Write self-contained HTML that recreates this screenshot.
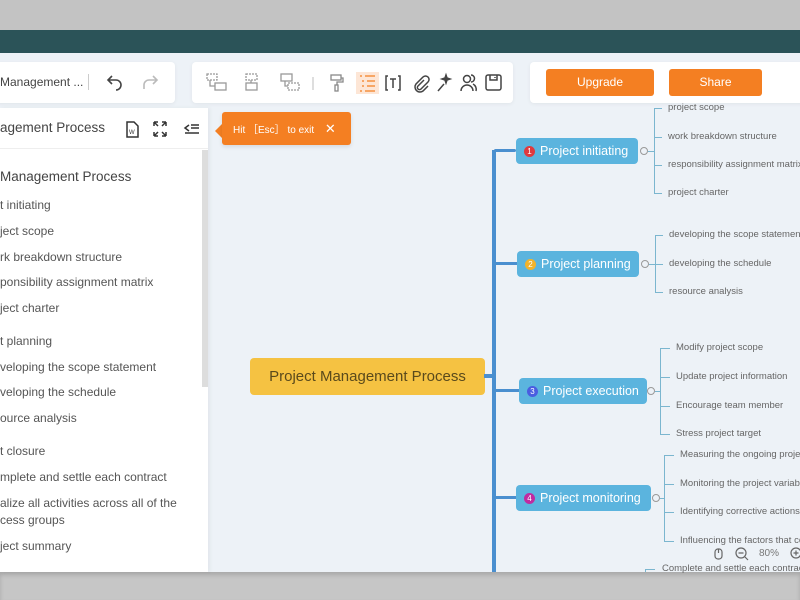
<!DOCTYPE html>
<html><head><meta charset="utf-8"><style>
*{margin:0;padding:0;box-sizing:border-box}
body{width:800px;height:600px;overflow:hidden;position:relative;background:#edf2f7;font-family:"Liberation Sans",sans-serif;color:#444}
.a{position:absolute}
.t{position:absolute;white-space:nowrap}
.box{position:absolute;background:#fff;border-radius:4px;box-shadow:0 1px 4px rgba(0,0,0,.06)}
.btn{position:absolute;background:#f47f22;color:#fff;border-radius:3px;font-size:12px;text-align:center;line-height:27px}
.lp{font-size:12px;color:#555}
.node{position:absolute;background:#5bb4de;color:#fff;border-radius:4px;font-size:12.5px;line-height:26px;padding-left:8px;white-space:nowrap}
.bd{display:inline-block;width:11px;height:11px;border-radius:50%;font-size:8px;line-height:11px;text-align:center;color:#fff;margin-right:5px;vertical-align:1px}
.ch{position:absolute;font-size:9.5px;color:#666;white-space:nowrap}
.ln{position:absolute;background:#7bb6cf}
.cc{position:absolute;width:8px;height:8px;border:1px solid #999;border-radius:50%;background:#edf2f7}
</style></head><body>
<div class="a" style="left:0;top:0;width:800px;height:30px;background:#c3c3c3"></div>
<div class="a" style="left:0;top:30px;width:800px;height:23px;background:#2b5358"></div>
<div class="a" style="left:0;top:572px;width:800px;height:28px;background:#c6c6c6;box-shadow:inset 0 3px 4px rgba(0,0,0,.15)"></div>

<!-- toolbar 1 -->
<div class="box" style="left:-5px;top:62px;width:180px;height:41px"></div>
<div class="t" style="left:0;top:75px;font-size:12px;color:#444">Management ...</div>
<div class="a" style="left:88px;top:74px;width:1px;height:16px;background:#ccc"></div>
<svg class="a" style="left:105px;top:73px" width="20" height="18" viewBox="0 0 20 18" fill="none" stroke="#444" stroke-width="1.6"><path d="M7 3L3 7l4 4M3 7h8a5 5 0 0 1 0 10"/></svg>
<svg class="a" style="left:140px;top:73px" width="20" height="18" viewBox="0 0 20 18" fill="none" stroke="#bbb" stroke-width="1.6"><path d="M13 3l4 4-4 4M17 7H9a5 5 0 0 0-5 5v4"/></svg>

<!-- toolbar 2 -->
<div class="box" style="left:192px;top:62px;width:321px;height:41px"></div>
<svg class="a" style="left:205px;top:72px" width="300" height="22" viewBox="0 0 300 22" fill="none" stroke="#999" stroke-width="1.3">
<rect x="2" y="2" width="10" height="6" stroke-dasharray="2 1"/><path d="M5 8v6h5"/><rect x="10" y="11" width="11" height="7"/>
<rect x="41" y="2" width="11" height="6" stroke-dasharray="2 1"/><path d="M46 8v3"/><rect x="41" y="11" width="11" height="7"/>
<rect x="76" y="2" width="11" height="7"/><path d="M80 9v5h3"/><rect x="83" y="11" width="11" height="7" stroke-dasharray="2 1"/>
<path d="M108 5v13" stroke="#ccc"/>
<g stroke="#888"><rect x="126" y="3" width="10" height="5"/><path d="M136 6h2v4h-6v3"/><rect x="130" y="13" width="3" height="6"/></g>
<rect x="151" y="0" width="23" height="22" fill="#fde6d6" stroke="none"/>
<g stroke="#f47f22"><path d="M155 4h2M160 4h10M157 9h2M162 9h8M157 14h2M162 14h8M155 19h2M160 19h10"/></g>
<g stroke="#444" stroke-width="1.5"><path d="M183 4h-2v14h2M193 4h2v14h-2M185 7h6M188 7v9"/>
<path d="M219 8l-6 6a2 2 0 0 0 3 3l7-7a3.5 3.5 0 0 0-5-5l-7 7a5 5 0 0 0 7 7l5-5"/>
<path d="M233 19l6-7M240 6l1-3 1 3 3 1-3 1-1 3-1-3-3-1z" fill="#444"/>
<circle cx="262" cy="7" r="3.5"/><path d="M256 19a6 6 0 0 1 12 0M266 3a3.5 3.5 0 0 1 0 7M268 12a6 6 0 0 1 3 7"/>
<rect x="281" y="3" width="15" height="15" rx="2"/><path d="M285 3v5h7V3M290 5v1"/></g>
</svg>

<!-- toolbar 3 -->
<div class="box" style="left:530px;top:62px;width:280px;height:41px"></div>
<div class="btn" style="left:546px;top:69px;width:108px">Upgrade</div>
<div class="btn" style="left:669px;top:69px;width:93px">Share</div>
<div class="btn" style="left:777px;top:69px;width:40px"></div>

<!-- left panel -->
<div class="a" style="left:0;top:108px;width:208px;height:464px;background:#fff;box-shadow:2px 0 4px rgba(0,0,0,.05)"></div>
<div class="a" style="left:0;top:148px;width:208px;height:1px;background:#eee"></div>
<div class="a" style="left:202px;top:150px;width:6px;height:237px;background:#ddd"></div>
<div class="t" style="left:0;top:120px;font-size:13.5px;color:#444">agement Process</div>
<svg class="a" style="left:125px;top:120px" width="80" height="18" viewBox="0 0 80 18" fill="none" stroke="#333" stroke-width="1.5">
<path d="M2 2h7l4 4v11H2z"/><text x="4" y="14" font-size="6" fill="#333" stroke="none" font-family="Liberation Sans">W</text>
<path d="M29 2h4M29 2v4M29 2l4 4M41 2h-4M41 2v4M41 2l-4 4M29 16h4M29 16v-4M29 16l4-4M41 16h-4M41 16v-4M41 16l-4-4"/>
<path d="M64 5l-4 3 4 3M66 5h8M66 8h8M60 13h14"/></svg>
<div class="t" style="left:0;top:169px;font-size:13.5px;color:#444">Management Process</div>
<div class="t lp" style="left:0;top:198px">t initiating</div>
<div class="t lp" style="left:0;top:224px">ject scope</div>
<div class="t lp" style="left:0;top:250px">rk breakdown structure</div>
<div class="t lp" style="left:0;top:275px">ponsibility assignment matrix</div>
<div class="t lp" style="left:0;top:301px">ject charter</div>
<div class="t lp" style="left:0;top:334px">t planning</div>
<div class="t lp" style="left:0;top:360px">veloping the scope statement</div>
<div class="t lp" style="left:0;top:385px">veloping the schedule</div>
<div class="t lp" style="left:0;top:411px">ource analysis</div>
<div class="t lp" style="left:0;top:444px">t closure</div>
<div class="t lp" style="left:0;top:470px">mplete and settle each contract</div>
<div class="t lp" style="left:0;top:496px">alize all activities across all of the</div>
<div class="t lp" style="left:0;top:513px">cess groups</div>
<div class="t lp" style="left:0;top:539px">ject summary</div>

<!-- tooltip -->
<div class="a" style="left:215px;top:124px;width:0;height:0;border:7px solid transparent;border-right-color:#f47f22;border-left:0"></div>
<div class="a" style="left:222px;top:112px;width:129px;height:33px;background:#f47f22;border-radius:3px;color:#fff;font-size:10px;line-height:33px;padding-left:11px;box-shadow:0 2px 4px rgba(0,0,0,.1)">Hit ［Esc］ to exit <span style="font-size:13px;margin-left:8px">✕</span></div>

<!-- root & trunk -->
<div class="a" style="left:250px;top:358px;width:235px;height:37px;background:#f5c242;border-radius:4px;color:#5a4a1c;font-size:15px;line-height:37px;text-align:center">Project Management Process</div>
<div class="a" style="left:484px;top:374px;width:10px;height:4px;background:#4a8fcf"></div>
<div class="a" style="left:492px;top:150px;width:4px;height:422px;background:#4a8fcf"></div>
<div class="a" style="left:494px;top:149px;width:22px;height:3px;background:#4a8fcf;border-radius:2px"></div>
<div class="a" style="left:494px;top:262px;width:23px;height:3px;background:#4a8fcf"></div>
<div class="a" style="left:494px;top:389px;width:25px;height:3px;background:#4a8fcf"></div>
<div class="a" style="left:494px;top:496px;width:22px;height:3px;background:#4a8fcf"></div>

<div class="node" style="left:516px;top:138px;width:122px"><span class="bd" style="background:#e0393e">1</span>Project initiating</div>
<div class="node" style="left:517px;top:251px;width:122px"><span class="bd" style="background:#f2b32a">2</span>Project planning</div>
<div class="node" style="left:519px;top:378px;width:128px"><span class="bd" style="background:#4a5de0">3</span>Project execution</div>
<div class="node" style="left:516px;top:485px;width:135px"><span class="bd" style="background:#c02aa0">4</span>Project monitoring</div>

<!-- initiating children -->
<div class="cc" style="left:640px;top:147px"></div>
<div class="ln" style="left:648px;top:151px;width:6px;height:1px"></div>
<div class="ln" style="left:654px;top:108px;width:1px;height:86px"></div>
<div class="ln" style="left:654px;top:108px;width:8px;height:1px"></div><div class="ch" style="left:668px;top:102px">project scope</div>
<div class="ln" style="left:654px;top:137px;width:8px;height:1px"></div><div class="ch" style="left:668px;top:131px">work breakdown structure</div>
<div class="ln" style="left:654px;top:165px;width:8px;height:1px"></div><div class="ch" style="left:668px;top:159px">responsibility assignment matrix</div>
<div class="ln" style="left:654px;top:193px;width:8px;height:1px"></div><div class="ch" style="left:668px;top:187px">project charter</div>
<!-- planning -->
<div class="cc" style="left:641px;top:260px"></div>
<div class="ln" style="left:649px;top:264px;width:6px;height:1px"></div>
<div class="ln" style="left:655px;top:235px;width:1px;height:58px"></div>
<div class="ln" style="left:655px;top:235px;width:8px;height:1px"></div><div class="ch" style="left:669px;top:229px">developing the scope statement</div>
<div class="ln" style="left:655px;top:264px;width:8px;height:1px"></div><div class="ch" style="left:669px;top:258px">developing the schedule</div>
<div class="ln" style="left:655px;top:292px;width:8px;height:1px"></div><div class="ch" style="left:669px;top:286px">resource analysis</div>
<!-- execution -->
<div class="cc" style="left:647px;top:387px"></div>
<div class="ln" style="left:655px;top:391px;width:5px;height:1px"></div>
<div class="ln" style="left:660px;top:348px;width:1px;height:87px"></div>
<div class="ln" style="left:660px;top:348px;width:10px;height:1px"></div><div class="ch" style="left:676px;top:342px">Modify project scope</div>
<div class="ln" style="left:660px;top:377px;width:10px;height:1px"></div><div class="ch" style="left:676px;top:371px">Update project information</div>
<div class="ln" style="left:660px;top:406px;width:10px;height:1px"></div><div class="ch" style="left:676px;top:400px">Encourage team member</div>
<div class="ln" style="left:660px;top:434px;width:10px;height:1px"></div><div class="ch" style="left:676px;top:428px">Stress project target</div>
<!-- monitoring -->
<div class="cc" style="left:652px;top:494px"></div>
<div class="ln" style="left:660px;top:498px;width:4px;height:1px"></div>
<div class="ln" style="left:664px;top:455px;width:1px;height:87px"></div>
<div class="ln" style="left:664px;top:455px;width:10px;height:1px"></div><div class="ch" style="left:680px;top:449px">Measuring the ongoing project</div>
<div class="ln" style="left:664px;top:484px;width:10px;height:1px"></div><div class="ch" style="left:680px;top:478px">Monitoring the project variables</div>
<div class="ln" style="left:664px;top:512px;width:10px;height:1px"></div><div class="ch" style="left:680px;top:506px">Identifying corrective actions to</div>
<div class="ln" style="left:664px;top:541px;width:10px;height:1px"></div><div class="ch" style="left:680px;top:535px">Influencing the factors that could</div>
<!-- bottom -->
<div class="ln" style="left:645px;top:569px;width:1px;height:3px"></div>
<div class="ln" style="left:645px;top:569px;width:10px;height:1px"></div><div class="ch" style="left:662px;top:563px">Complete and settle each contract</div>

<!-- zoom controls -->
<svg class="a" style="left:712px;top:545px" width="90" height="16" viewBox="0 0 90 16" fill="none" stroke="#666" stroke-width="1.2">
<rect x="3" y="4" width="7" height="10" rx="3"/><path d="M6.5 4v4"/>
<circle cx="29" cy="8" r="5"/><path d="M26.5 8h5M33 12l3 3"/>
<circle cx="84" cy="8" r="5"/><path d="M81.5 8h5M84 5.5v5"/></svg>
<div class="t" style="left:759px;top:548px;font-size:10px;color:#777">80%</div>
</body></html>
